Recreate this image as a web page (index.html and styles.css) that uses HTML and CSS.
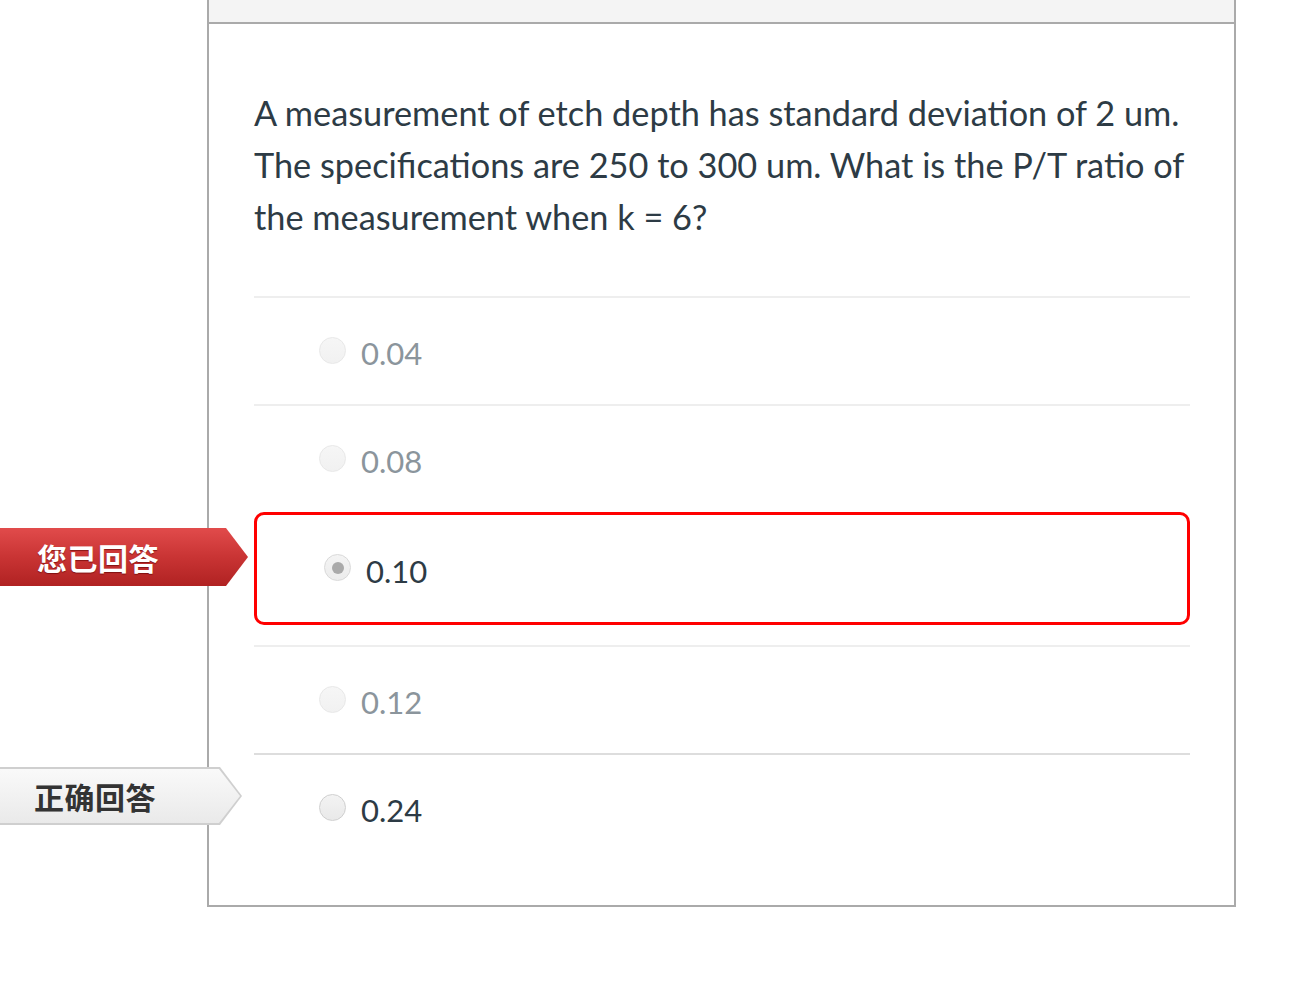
FILE: index.html
```html
<!DOCTYPE html>
<html lang="en">
<head>
<meta charset="utf-8">
<link rel="stylesheet" href="styles.css">
</head>
<body>
<div class="page">
  <div class="card">
    <div class="card-header"></div>
    <div class="card-body">
      <p class="question">A measurement of etch depth has standard deviation of 2 um. The specifications are 250 to 300 um. What is the P/T ratio of the measurement when k = 6?</p>
      <div class="answers">
        <div class="answer">
          <span class="radio"></span><span class="label muted">0.04</span>
        </div>
        <div class="answer">
          <span class="radio"></span><span class="label muted">0.08</span>
        </div>
        <div class="answer selected">
          <div class="badge badge-red">您已回答</div>
          <div class="sel-box">
            <span class="radio checked"></span><span class="label">0.10</span>
          </div>
        </div>
        <div class="answer">
          <span class="radio"></span><span class="label muted">0.12</span>
        </div>
        <div class="answer correct">
          <div class="badge badge-gray">正确回答</div>
          <span class="radio active"></span><span class="label">0.24</span>
        </div>
      </div>
    </div>
  </div>
</div>
</body>
</html>
```

FILE: styles.css
```css
html, body {
  margin: 0;
  padding: 0;
  background: #fff;
}
.page {
  padding-left: 207px;
  width: 1307px;
  box-sizing: border-box;
}
.card {
  width: 1029px;
  box-sizing: border-box;
  border-left: 2px solid #aaaaaa;
  border-right: 2px solid #aaaaaa;
  border-bottom: 2px solid #aaaaaa;
  font-family: Lato, "Noto Sans", sans-serif;
  color: #2d3b45;
}
.card-header {
  height: 22px;
  background: #f4f4f4;
  border-bottom: 2px solid #aaaaaa;
}
.card-body {
  padding: 63px 44px 44px 45px;
}
.question {
  margin: 0;
  font-size: 34.3px;
  line-height: 52px;
}
.answers {
  margin-top: 53px;
}
.answer {
  position: relative;
  border-top: 2px solid #eeeeee;
  height: 106px;
  display: flex;
  align-items: center;
  padding-left: 65px;
}
.answer.selected {
  border-top: none;
  height: auto;
  padding: 0 0 20px 0;
  display: block;
}
.answer.correct {
  border-top-color: #dddddd;
}
.sel-box {
  height: 107px;
  border: 3px solid #ff0000;
  border-radius: 10px;
  display: flex;
  align-items: center;
  padding-left: 67px;
}
.radio {
  width: 27px;
  height: 27px;
  box-sizing: border-box;
  border-radius: 50%;
  border: 1px solid #e8e8e8;
  background: linear-gradient(#f6f6f6, #f1f1f1);
  margin-right: 15px;
  margin-top: -2px;
  flex: none;
  position: relative;
}
.radio.active {
  border-color: #cfcfcf;
  background: linear-gradient(#f3f3f3, #e9e9e9);
}
.radio.checked {
  border-color: #d9d9d9;
  background: linear-gradient(#f4f4f4, #ececec);
}
.radio.checked::after {
  content: "";
  position: absolute;
  left: 6.5px;
  top: 6.5px;
  width: 12px;
  height: 12px;
  border-radius: 50%;
  background: #aaaaaa;
}
.label {
  font-size: 31px;
  line-height: 40px;
  margin-top: 4px;
}
.label.muted {
  color: #8b959c;
}
.badge {
  position: absolute;
  left: -254px;
  height: 58px;
  display: flex;
  align-items: center;
  font-family: "Noto Sans CJK SC", sans-serif;
  font-weight: 700;
  font-size: 30px;
  letter-spacing: 0.5px;
  box-sizing: border-box;
}
.badge-red {
  top: 16px;
  width: 248px;
  padding-left: 37px;
  color: #ffffff;
  text-shadow: 0 1px 1px rgba(90, 0, 0, 0.6);
  background: linear-gradient(#e14b4b, #c93434 50%, #b02222);
  clip-path: polygon(0 0, 226px 0, 248px 50%, 226px 100%, 0 100%);
}
.badge-gray {
  top: 12px;
  width: 242px;
  padding-left: 34px;
  color: #333333;
  background: #cfcfcf;
  clip-path: polygon(0 0, 220px 0, 242px 50%, 220px 100%, 0 100%);
  z-index: 1;
  isolation: isolate;
}
.badge-gray::before {
  content: "";
  position: absolute;
  inset: 0;
  background: linear-gradient(#fafafa, #e9e9e9);
  clip-path: polygon(0 2px, 219px 2px, 240px 50%, 219px calc(100% - 2px), 0 calc(100% - 2px));
  z-index: -1;
}
```
